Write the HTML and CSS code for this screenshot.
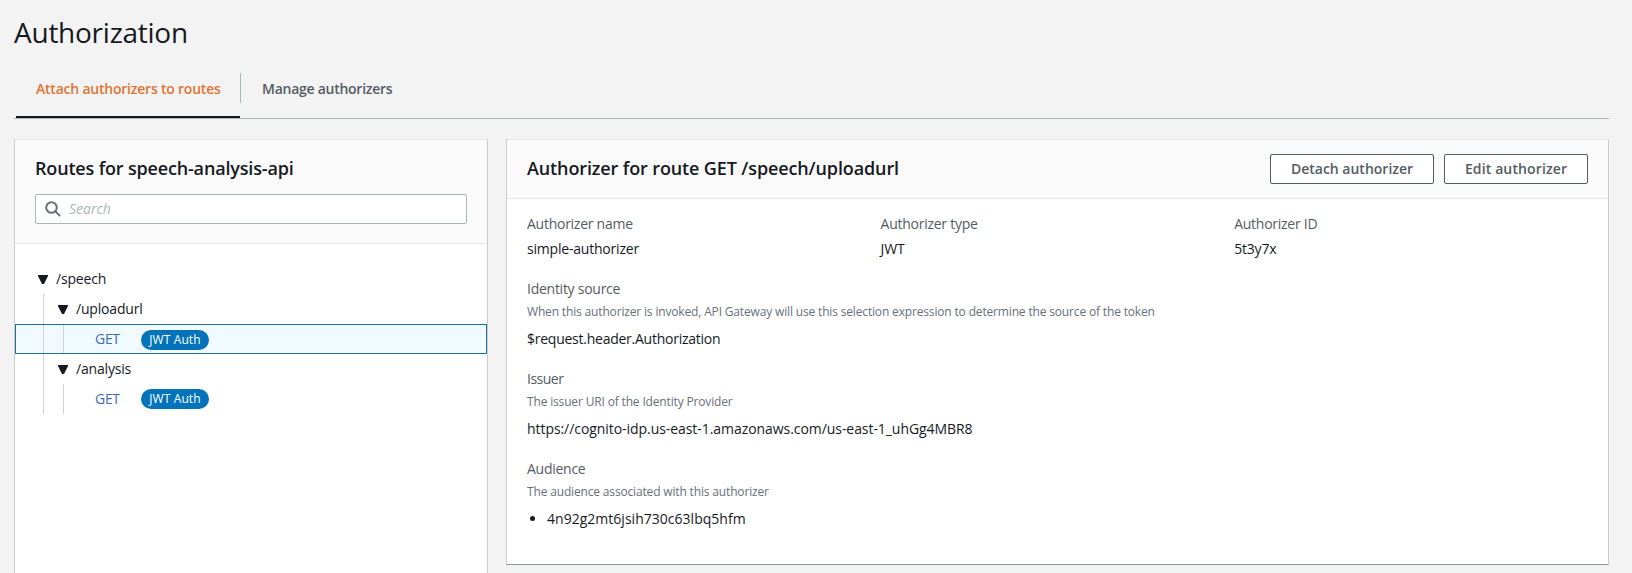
FILE: index.html
```html
<!DOCTYPE html>
<html lang="en">
<head>
<meta charset="utf-8">
<title>Authorization</title>
<link rel="stylesheet" href="styles.css">
</head>
<body>
<main class="page">
  <h1 class="page-title">Authorization</h1>
  <nav class="tabs">
    <a class="tab tab-active">Attach authorizers to routes</a>
    <a class="tab tab-manage">Manage authorizers</a>
  </nav>
  <div class="columns">
    <section class="panel routes">
      <header class="routes-header">
        <h2 class="panel-title routes-title">Routes for speech-analysis-api</h2>
        <div class="search">
          <svg class="search-icon" viewBox="0 0 16 16" width="16" height="16"><circle cx="6.5" cy="6.5" r="5.3"/><path d="M10.4 10.4 15 15"/></svg>
          <span class="search-placeholder">Search</span>
        </div>
      </header>
      <div class="tree">
        <div class="row"><span class="caret-cell"><svg class="caret" viewBox="0 0 10 9" width="10" height="9"><path d="M0 0h10v1L6 9H4L0 1z"/></svg></span><span class="path">/speech</span></div>
        <div class="row"><span class="guide"></span><span class="caret-cell"><svg class="caret" viewBox="0 0 10 9" width="10" height="9"><path d="M0 0h10v1L6 9H4L0 1z"/></svg></span><span class="path">/uploadurl</span></div>
        <div class="row row-selected"><span class="guide"></span><span class="guide"></span><a class="method">GET</a><span class="badge">JWT Auth</span></div>
        <div class="row"><span class="guide"></span><span class="caret-cell"><svg class="caret" viewBox="0 0 10 9" width="10" height="9"><path d="M0 0h10v1L6 9H4L0 1z"/></svg></span><span class="path">/analysis</span></div>
        <div class="row"><span class="guide"></span><span class="guide"></span><a class="method">GET</a><span class="badge">JWT Auth</span></div>
      </div>
    </section>
    <section class="panel details">
      <header class="details-header">
        <h2 class="panel-title">Authorizer for route GET /speech/uploadurl</h2>
        <div class="actions">
          <button class="button">Detach authorizer</button>
          <button class="button button-edit">Edit authorizer</button>
        </div>
      </header>
      <div class="details-body">
        <div class="summary">
          <div class="field"><div class="label">Authorizer name</div><div class="value">simple-authorizer</div></div>
          <div class="field"><div class="label">Authorizer type</div><div class="value">JWT</div></div>
          <div class="field"><div class="label">Authorizer ID</div><div class="value">5t3y7x</div></div>
        </div>
        <div class="field"><div class="label">Identity source</div><div class="hint">When this authorizer is invoked, API Gateway will use this selection expression to determine the source of the token</div><div class="value header-name">$request.header.Authorization</div></div>
        <div class="field"><div class="label issuer">Issuer</div><div class="hint">The issuer URI of the Identity Provider</div><div class="value url">https://cognito-idp.us-east-1.amazonaws.com/us-east-1_uhGg4MBR8</div></div>
        <div class="field"><div class="label">Audience</div><div class="hint">The audience associated with this authorizer</div><ul class="value audience"><li>4n92g2mt6jsih730c63lbq5hfm</li></ul></div>
      </div>
    </section>
  </div>
</main>
</body>
</html>
```
FILE: styles.css
```css
* { box-sizing: border-box; }
body {
  margin: 0;
  background: #f3f3f3;
  color: #16191f;
  font: 14px/22px "Open Sans", "Noto Sans", sans-serif;
}
.page { padding: 14px 23px 0 14px; }
.page-title { margin: 0; font-size: 28px; line-height: 36px; font-weight: 400; letter-spacing: -0.25px; }

.tabs { display: flex; height: 46px; margin-top: 23px; border-bottom: 1px solid #aab7b8; padding-left: 2px; }
.tab { height: 46px; padding: 5px 20px 0; font-weight: 600; letter-spacing: -0.22px; color: #545b64; }
.tab-active {
  width: 224px;
  height: 45px;
  white-space: nowrap;
  color: #e07532;
  border-bottom: 2px solid #16191f;
}
.tab-manage { height: 30px; padding-left: 21px; border-left: 1px solid #aab7b8; letter-spacing: -0.26px; }

.columns { display: grid; grid-template-columns: 474px 1103px; gap: 18px; margin-top: 20px; align-items: start; }
.panel { background: #fff; border: 1px solid #c8cdcd; border-top-color: #e4e6e6; }
.panel-title { margin: 0; font-size: 18px; line-height: 22px; font-weight: 600; letter-spacing: -0.12px; }
.routes-title { letter-spacing: -0.17px; }

.routes { height: 434px; border-bottom: 0; }
.routes-header { height: 104px; padding: 17px 20px 0; background: #fafafa; border-bottom: 1px solid #e6e9e9; }
.search { display: flex; align-items: center; gap: 8px; height: 30px; margin-top: 15px; padding-left: 9px; background: #fff; border: 1px solid #aab7b8; border-radius: 2px; }
.search-icon { fill: none; stroke: #687078; stroke-width: 2; }
.search-placeholder { font-style: italic; color: #aab7b8; }

.tree { padding-top: 20px; }
.row { display: flex; align-items: center; height: 30px; padding-left: 28px; }
.row-selected { background: #f1faff; outline: 1px solid #1f6f9e; outline-offset: -1px; }
.guide { width: 20px; align-self: stretch; border-left: 1px solid #d0d4d6; }
.caret-cell { display: flex; width: 13px; margin-left: -5px; margin-right: 5px; }
.caret { fill: #16191f; }
.path { letter-spacing: -0.18px; }
.method { width: 46px; margin-left: 12px; color: #3d6fb0; letter-spacing: -0.3px; }
.badge { height: 20px; width: 68px; border-radius: 10px; background: #0073bb; color: #fff; font-size: 12px; font-weight: 500; line-height: 20px; text-align: center; letter-spacing: 0.1px; }
.row-selected .badge { margin-top: 2px; }

.details { height: 426px; border-bottom: 1px solid #879596; }
.details-header { display: flex; justify-content: space-between; height: 59px; padding: 14px 20px 0; background: #fafafa; border-bottom: 1px solid #e6e9e9; }
.details-header .panel-title { margin-top: 3px; }
.actions { display: flex; gap: 10px; }
.button { width: 164px; height: 30px; padding: 0; border: 1px solid #545b64; border-radius: 2px; background: #fff; color: #545b64; font: 600 14px/20px "Open Sans", "Noto Sans", sans-serif; }
.button-edit { width: 144px; letter-spacing: 0.12px; }

.details-body { padding: 14px 20px 0; }
.summary { display: grid; grid-template-columns: repeat(3, 353.6px); }
.field { margin-bottom: 18px; }
.label { color: #545b64; letter-spacing: -0.26px; }
.issuer { letter-spacing: -0.5px; }
.value { margin-top: 3px; letter-spacing: -0.2px; }
.hint { margin-top: 1px; font-size: 12px; color: #687078; letter-spacing: -0.16px; }
.hint + .value { margin-top: 5px; }
.header-name { letter-spacing: -0.25px; }
.url { letter-spacing: -0.06px; }
.audience { margin: 0; padding-left: 20px; letter-spacing: 0.02px; }
```
